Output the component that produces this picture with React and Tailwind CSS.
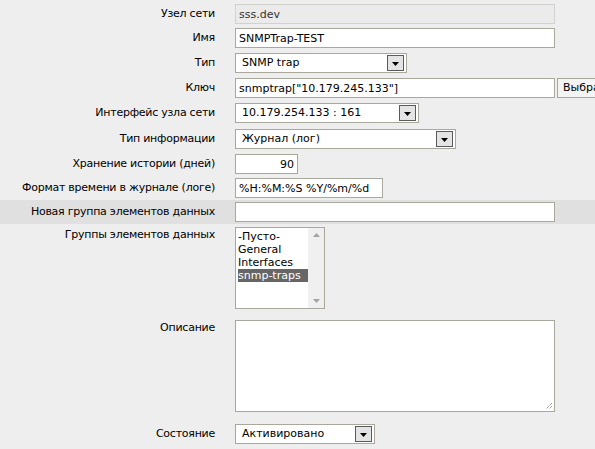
import React from 'react'

const font = { fontFamily: '"DejaVu Sans", Verdana, sans-serif' }

function Arrow() {
  return (
    <span className="absolute right-[2px] top-[1px] w-[17px] h-[16px] border border-[#5a5a5a] bg-[#e4e4e4] flex items-end justify-center pb-[4px]">
      <svg width="7" height="4" viewBox="0 0 7 4"><path d="M0 0h7L3.5 4z" fill="#000" /></svg>
    </span>
  )
}

function Select({ value, width }) {
  return (
    <div className={`relative h-[20px] border border-[#aaa79c] bg-white text-[11px] leading-[18px] pl-[6px] text-black ${width}`}>
      {value}
      <Arrow />
    </div>
  )
}

function Text({ value, width, right }) {
  return (
    <input
      readOnly
      value={value}
      style={font}
      className={`h-[20px] border border-[#aaa79c] bg-white text-[11px] px-[3px] text-black outline-none ${width} ${right ? 'text-right' : ''}`}
    />
  )
}

function Row({ label, h, pt = 'pt-[2px]', gray, top, children }) {
  return (
    <div className={`flex items-start ${h} ${pt} ${gray ? 'bg-[#e0e0e0]' : ''}`}>
      <div className={`w-[215px] shrink-0 text-right text-[11px] tracking-[-0.25px] text-black ${top ? 'leading-[16px]' : 'leading-[20px]'}`}>{label}</div>
      <div className="ml-[20px] flex">{children}</div>
    </div>
  )
}

export default function App() {
  return (
    <div className="w-[595px] h-[449px] overflow-hidden bg-[#eeeeee] pt-[2px]" style={font}>
      <Row label="Узел сети" h="h-[24px]">
        <input readOnly value="sss.dev" style={font}
          className="h-[20px] w-[320px] border border-[#d2d2cc] bg-[#ebebeb] text-[11px] px-[3px] text-[#333] outline-none" />
      </Row>
      <Row label="Имя" h="h-[25px]">
        <Text value="SNMPTrap-TEST" width="w-[320px]" />
      </Row>
      <Row label="Тип" h="h-[25px]">
        <Select value="SNMP trap" width="w-[172px]" />
      </Row>
      <Row label="Ключ" h="h-[25px]">
        <div className="flex w-[400px]">
          <Text value={'snmptrap["10.179.245.133"]'} width="w-[320px] shrink-0" />
          <button style={font} className="ml-[2px] h-[20px] shrink-0 border border-[#aaa79c] bg-[#f4f4f4] text-[11px] pl-[5px] pr-[5px] text-black whitespace-nowrap">Выбрать</button>
        </div>
      </Row>
      <Row label="Интерфейс узла сети" h="h-[26px]">
        <Select value="10.179.254.133 : 161" width="w-[184px]" />
      </Row>
      <Row label="Тип информации" h="h-[25px]">
        <Select value="Журнал (лог)" width="w-[221px]" />
      </Row>
      <Row label="Хранение истории (дней)" h="h-[24px]">
        <Text value="90" width="w-[63px]" right />
      </Row>
      <Row label="Формат времени в журнале (логе)" h="h-[24px]">
        <Text value="%H:%M:%S %Y/%m/%d" width="w-[148px]" />
      </Row>
      <Row label="Новая группа элементов данных" h="h-[24px]" gray>
        <Text value="" width="w-[320px]" />
      </Row>
      <Row label="Группы элементов данных" h="h-[94px]" pt="pt-[3px]" top>
        <div className="w-[90px] h-[82px] border border-[#aaa79c] bg-white flex">
          <div className="flex-1 pt-[2px] pl-[2px] text-[11px] leading-[13px] text-black">
            <div>-Пусто-</div>
            <div>General</div>
            <div>Interfaces</div>
            <div className="bg-[#666666] text-white">snmp-traps</div>
          </div>
          <div className="w-[16px] bg-[#f0f0f0] flex flex-col items-center justify-between py-[5px]">
            <svg width="7" height="4" viewBox="0 0 7 4"><path d="M3.5 0L7 4H0z" fill="#a3a3a3" /></svg>
            <svg width="7" height="4" viewBox="0 0 7 4"><path d="M0 0h7L3.5 4z" fill="#a3a3a3" /></svg>
          </div>
        </div>
      </Row>
      <Row label="Описание" h="h-[102px]" pt="pt-[2px]" top>
        <div className="relative w-[320px] h-[92px] border border-[#aaa79c] bg-white">
          <svg className="absolute right-[1px] bottom-[1px]" width="9" height="9" viewBox="0 0 9 9">
            <path d="M8 2L2 8M8 5L5 8" stroke="#777" strokeWidth="1" strokeDasharray="1 1" />
          </svg>
        </div>
      </Row>
      <Row label="Состояние" h="h-[25px]" pt="pt-[4px]">
        <Select value="Активировано" width="w-[140px]" />
      </Row>
    </div>
  )
}
